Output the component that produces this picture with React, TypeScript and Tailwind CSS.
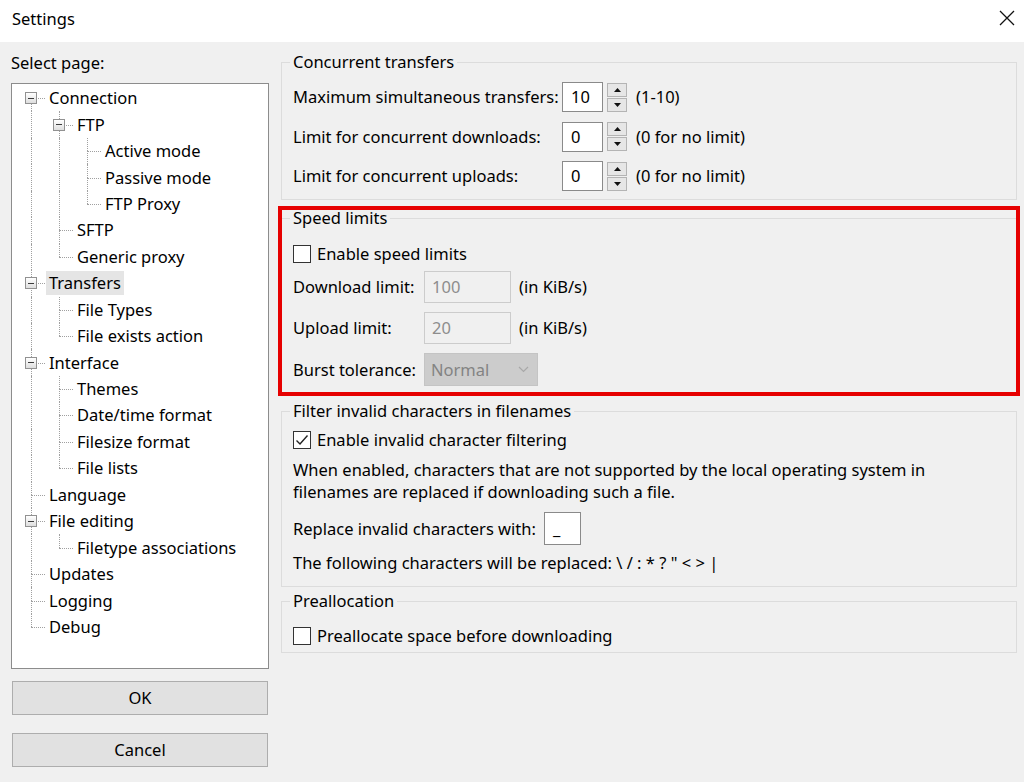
import React from 'react';

interface TreeRow {
  label: string;
  depth: number;
  open?: boolean;
  last?: boolean;
  anc: boolean[];
  selected?: boolean;
}

const rows: TreeRow[] = [
  { label: 'Connection', depth: 0, open: true, anc: [] },
  { label: 'FTP', depth: 1, open: true, anc: [true] },
  { label: 'Active mode', depth: 2, anc: [true, true] },
  { label: 'Passive mode', depth: 2, anc: [true, true] },
  { label: 'FTP Proxy', depth: 2, last: true, anc: [true, true] },
  { label: 'SFTP', depth: 1, anc: [true] },
  { label: 'Generic proxy', depth: 1, last: true, anc: [true] },
  { label: 'Transfers', depth: 0, open: true, anc: [], selected: true },
  { label: 'File Types', depth: 1, anc: [true] },
  { label: 'File exists action', depth: 1, last: true, anc: [true] },
  { label: 'Interface', depth: 0, open: true, anc: [] },
  { label: 'Themes', depth: 1, anc: [true] },
  { label: 'Date/time format', depth: 1, anc: [true] },
  { label: 'Filesize format', depth: 1, anc: [true] },
  { label: 'File lists', depth: 1, last: true, anc: [true] },
  { label: 'Language', depth: 0, anc: [] },
  { label: 'File editing', depth: 0, open: true, anc: [] },
  { label: 'Filetype associations', depth: 1, last: true, anc: [true] },
  { label: 'Updates', depth: 0, anc: [] },
  { label: 'Logging', depth: 0, anc: [] },
  { label: 'Debug', depth: 0, last: true, anc: [] },
];

const Expander = () => (
  <div className="absolute left-[8px] top-1/2 -translate-y-1/2 w-[12px] h-[12px] border border-[#919191] bg-gradient-to-b from-white to-[#dedede] flex items-center justify-center">
    <div className="w-[6px] h-[1px] bg-[#3b3b3b]" />
  </div>
);

const TreeItem = ({ row, first }: { row: TreeRow; first: boolean }) => (
  <div className="flex items-center h-[26.45px]">
    {row.anc.map((cont, i) => (
      <div key={i} className="relative w-[28px] h-full shrink-0">
        {cont && <div className="absolute left-[14px] top-0 bottom-0 border-l border-dotted border-[#a0a0a0]" />}
      </div>
    ))}
    <div className="relative w-[28px] h-full shrink-0">
      {!first && <div className="absolute left-[14px] top-0 h-1/2 border-l border-dotted border-[#a0a0a0]" />}
      {!row.last && <div className="absolute left-[14px] top-1/2 bottom-0 border-l border-dotted border-[#a0a0a0]" />}
      <div className="absolute left-[14px] right-0 top-1/2 border-t border-dotted border-[#a0a0a0]" />
      {row.open && <Expander />}
    </div>
    <span className={`ml-[1px] px-[3px] leading-[24px] whitespace-nowrap ${row.selected ? 'bg-[#e5e5e5]' : ''}`}>
      {row.label}
    </span>
  </div>
);

const Spin = () => (
  <div className="ml-[4px] flex flex-col gap-[1px] w-[20px]">
    <div className="h-[14px] border border-[#b4b4b4] bg-[#e6e6e6] flex items-center justify-center">
      <svg width="7" height="4" viewBox="0 0 7 4"><path d="M3.5 0 L7 4 L0 4 Z" fill="#111" /></svg>
    </div>
    <div className="h-[14px] border border-[#b4b4b4] bg-[#e6e6e6] flex items-center justify-center">
      <svg width="7" height="4" viewBox="0 0 7 4"><path d="M0 0 L7 0 L3.5 4 Z" fill="#111" /></svg>
    </div>
  </div>
);

const SpinRow = ({ label, value, hint }: { label: string; value: string; hint: string }) => (
  <div className="flex items-center h-[30px]">
    <span className="w-[269px] shrink-0">{label}</span>
    <div className="w-[41px] h-[30px] border border-[#8a8a8a] bg-white pl-[8px] flex items-center">{value}</div>
    <Spin />
    <span className="ml-[9px]">{hint}</span>
  </div>
);

const Checkbox = ({ checked, label }: { checked?: boolean; label: string }) => (
  <div className="flex items-center h-[20px]">
    <div className="w-[18px] h-[18px] border border-[#333] bg-white flex items-center justify-center">
      {checked && (
        <svg width="14" height="12" viewBox="0 0 14 12">
          <path d="M1.5 6.5 L5 10 L12.5 1.5" fill="none" stroke="#222" strokeWidth="1.4" />
        </svg>
      )}
    </div>
    <span className="ml-[6px]">{label}</span>
  </div>
);

const DisabledField = ({ label, value }: { label: string; value: string }) => (
  <div className="flex items-center h-[32px]">
    <span className="w-[131px] shrink-0">{label}</span>
    <div className="w-[87px] h-full border border-[#cccccc] bg-[#f0f0f0] pl-[7px] flex items-center text-[#8d8d8d]">{value}</div>
    <span className="ml-[8px]">(in KiB/s)</span>
  </div>
);

export default function App() {
  return (
    <div className="w-[1024px] h-[782px] bg-[#f0f0f0] flex flex-col font-['Noto_Sans',sans-serif] text-[16.5px] leading-[20px] text-black">
      {/* title bar */}
      <div className="h-[42px] bg-white flex items-start pt-[9px] pl-[12px] shrink-0">
        <span>Settings</span>
        <svg className="ml-auto mr-[9px] mt-[1px]" width="16" height="16" viewBox="0 0 16 16">
          <path d="M1 1 L15 15 M15 1 L1 15" stroke="#111" strokeWidth="1.3" />
        </svg>
      </div>

      <div className="flex flex-1 pl-[11px]">
        {/* left column */}
        <div className="w-[258px] shrink-0 flex flex-col pt-[11px]">
          <span>Select page:</span>
          <div className="mt-[10px] h-[586px] border border-[#8c8c8c] bg-white pt-[1px] pl-[5px] overflow-hidden">
            {rows.map((r, i) => (
              <TreeItem key={r.label} row={r} first={i === 0} />
            ))}
          </div>
          <button className="mt-[12px] mx-[1px] h-[34px] border border-[#adadad] bg-[#e1e1e1]">OK</button>
          <button className="mt-[18px] mx-[1px] h-[34px] border border-[#adadad] bg-[#e1e1e1]">Cancel</button>
        </div>

        {/* right column */}
        <div className="flex-1 ml-[12px] mr-[7px] pt-[10px] flex flex-col">
          <fieldset className="border border-[#dcdcdc] px-[11px] pb-[8px]">
            <legend className="-ml-[3px] px-[3px]">Concurrent transfers</legend>
            <div className="mt-[10px] flex flex-col gap-[9.5px]">
              <SpinRow label="Maximum simultaneous transfers:" value="10" hint="(1-10)" />
              <SpinRow label="Limit for concurrent downloads:" value="0" hint="(0 for no limit)" />
              <SpinRow label="Limit for concurrent uploads:" value="0" hint="(0 for no limit)" />
            </div>
          </fieldset>

          <div className="mt-[6px] -mx-[3px] border-[4px] border-[#e60000]">
            <fieldset className="-mt-[2px] border-t border-[#dcdcdc] px-[11px] pb-[6px]">
              <legend className="-ml-[3px] px-[3px]">Speed limits</legend>
              <div className="mt-[16px] flex flex-col">
                <Checkbox label="Enable speed limits" />
                <div className="mt-[7px]">
                  <DisabledField label="Download limit:" value="100" />
                </div>
                <div className="mt-[9px]">
                  <DisabledField label="Upload limit:" value="20" />
                </div>
                <div className="mt-[9px] flex items-center h-[33px]">
                  <span className="w-[131px] shrink-0">Burst tolerance:</span>
                  <div className="w-[114px] h-full border border-[#c4c4c4] bg-[#cccccc] pl-[6px] pr-[8px] flex items-center justify-between text-[#838383]">
                    <span>Normal</span>
                    <svg width="11" height="7" viewBox="0 0 11 7">
                      <path d="M1 1 L5.5 5.5 L10 1" fill="none" stroke="#a8a8a8" strokeWidth="1.2" />
                    </svg>
                  </div>
                </div>
              </div>
            </fieldset>
          </div>

          <fieldset className="mt-[5px] border border-[#dcdcdc] px-[11px] pb-[13px]">
            <legend className="-ml-[3px] px-[3px]">Filter invalid characters in filenames</legend>
            <div className="mt-[9px]">
              <Checkbox checked label="Enable invalid character filtering" />
            </div>
            <p className="mt-[9px] leading-[22px]">
              When enabled, characters that are not supported by the local operating system in
              <br />
              filenames are replaced if downloading such a file.
            </p>
            <div className="mt-[9px] flex items-center h-[33px]">
              <span>Replace invalid characters with:</span>
              <div className="ml-[8px] w-[37px] h-full border border-[#8a8a8a] bg-white pl-[8px] flex items-center">_</div>
            </div>
            <div className="mt-[8px]">The following characters will be replaced: \ / : * ? &quot; &lt; &gt; |</div>
          </fieldset>

          <fieldset className="mt-[4px] border border-[#dcdcdc] px-[11px] pb-[6px]">
            <legend className="-ml-[3px] px-[3px]">Preallocation</legend>
            <div className="mt-[15px]">
              <Checkbox label="Preallocate space before downloading" />
            </div>
          </fieldset>
        </div>
      </div>
    </div>
  );
}
